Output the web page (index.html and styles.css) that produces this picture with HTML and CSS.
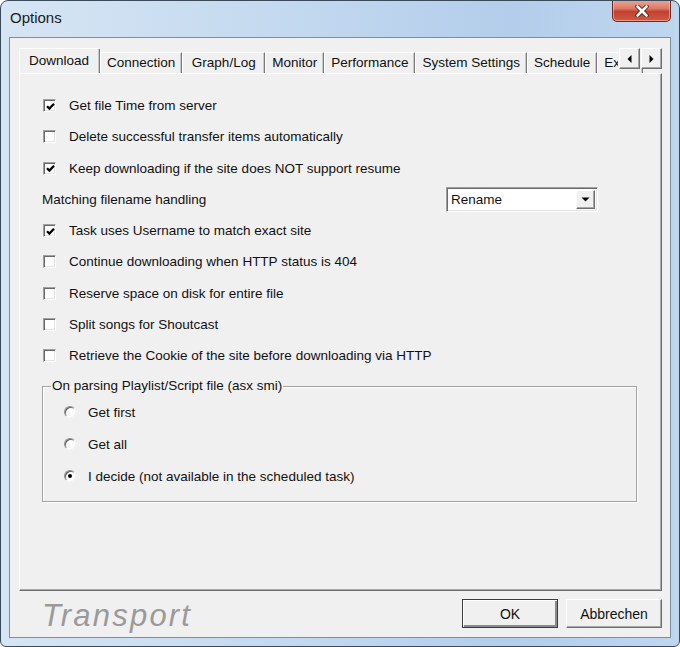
FILE: index.html
```html
<!DOCTYPE html>
<html>
<head>
<meta charset="utf-8">
<title>Options</title>
<link rel="stylesheet" href="styles.css">
</head>
<body>
<div class="window">
  <div class="titlebar">
    <span class="title">Options</span>
    <div class="close">
      <svg width="14" height="12" viewBox="0 0 14 12">
        <path d="M2.5 1.5 L11.5 10.5 M11.5 1.5 L2.5 10.5" stroke="#5a1810" stroke-width="4.4" stroke-linecap="round"/>
        <path d="M2.5 1.5 L11.5 10.5 M11.5 1.5 L2.5 10.5" stroke="#ffffff" stroke-width="2.6" stroke-linecap="round"/>
      </svg>
    </div>
  </div>
  <div class="client">
    <div class="tabctl">
      <div class="tabstrip">
        <div class="tab active">Download</div>
        <div class="tab">Connection</div>
        <div class="tab wide">Graph/Log</div>
        <div class="tab">Monitor</div>
        <div class="tab">Performance</div>
        <div class="tab">System Settings</div>
        <div class="tab">Schedule</div>
        <div class="tab">Extra</div>
        <div class="scroller">
          <div class="sbtn"><svg width="5" height="8" viewBox="0 0 5 8"><path d="M4.5 0 L4.5 8 L0.5 4 Z" fill="#000"/></svg></div>
          <div class="sbtn"><svg width="5" height="8" viewBox="0 0 5 8"><path d="M0.5 0 L0.5 8 L4.5 4 Z" fill="#000"/></svg></div>
        </div>
      </div>
      <div class="panel">
        <div class="row"><span class="cb checked"><svg width="9" height="9" viewBox="0 0 9 9"><path d="M1 4.2 L3.4 6.6 L8 1.8" stroke="#000" stroke-width="2.2" fill="none"/></svg></span><span class="lbl">Get file Time from server</span></div>
        <div class="row"><span class="cb"></span><span class="lbl">Delete successful transfer items automatically</span></div>
        <div class="row"><span class="cb checked"><svg width="9" height="9" viewBox="0 0 9 9"><path d="M1 4.2 L3.4 6.6 L8 1.8" stroke="#000" stroke-width="2.2" fill="none"/></svg></span><span class="lbl">Keep downloading if the site does NOT support resume</span></div>
        <div class="row plain">
          <span>Matching filename handling</span>
          <div class="select">
            <span class="sel-text">Rename</span>
            <span class="sel-arrow"><svg width="9" height="5" viewBox="0 0 9 5"><path d="M0.5 0.5 L8.5 0.5 L4.5 4.5 Z" fill="#000"/></svg></span>
          </div>
        </div>
        <div class="row"><span class="cb checked"><svg width="9" height="9" viewBox="0 0 9 9"><path d="M1 4.2 L3.4 6.6 L8 1.8" stroke="#000" stroke-width="2.2" fill="none"/></svg></span><span class="lbl">Task uses Username to match exact site</span></div>
        <div class="row"><span class="cb"></span><span class="lbl">Continue downloading when HTTP status is 404</span></div>
        <div class="row"><span class="cb"></span><span class="lbl">Reserve space on disk for entire file</span></div>
        <div class="row"><span class="cb"></span><span class="lbl">Split songs for Shoutcast</span></div>
        <div class="row"><span class="cb"></span><span class="lbl">Retrieve the Cookie of the site before downloading via HTTP</span></div>
        <fieldset class="group">
          <legend>On parsing Playlist/Script file (asx smi)</legend>
          <div class="rrow"><span class="radio"></span><span class="rlbl">Get first</span></div>
          <div class="rrow"><span class="radio"></span><span class="rlbl">Get all</span></div>
          <div class="rrow"><span class="radio on"></span><span class="rlbl">I decide (not available in the scheduled task)</span></div>
        </fieldset>
      </div>
    </div>
    <div class="footer">
      <span class="brand">Transport</span>
      <div class="buttons">
        <div class="btn default">OK</div>
        <div class="btn">Abbrechen</div>
      </div>
    </div>
  </div>
</div>
</body>
</html>
```

FILE: styles.css
```css
html, body {
  margin: 0;
  padding: 0;
  background: #ffffff;
}

body {
  font-family: "Liberation Sans", Arial, sans-serif;
  font-size: 13.5px;
  color: #111;
}

.window {
  width: 680px;
  height: 647px;
  box-sizing: border-box;
  border: 1px solid #3b4a5b;
  border-radius: 8px 8px 6px 6px;
  background: linear-gradient(to right, #d6e5f4 0%, #c2d8ef 45%, #b3cdea 75%, #bfd6ef 100%);
  padding: 0 8px 8px 8px;
  display: flex;
  flex-direction: column;
  overflow: hidden;
}

.titlebar {
  height: 36px;
  display: flex;
  justify-content: space-between;
  align-items: flex-start;
  flex-shrink: 0;
}

.title {
  font-family: "Liberation Sans", Arial, sans-serif;
  font-size: 15px;
  line-height: 34px;
  padding-left: 1px;
  color: #1a1a1a;
}

.close {
  width: 59px;
  height: 22px;
  margin-top: -1px;
  box-sizing: border-box;
  border: 1px solid #6e2a20;
  border-top: none;
  border-radius: 0 0 5px 5px;
  background: linear-gradient(to bottom, #e9a897 0%, #dd7a66 40%, #c2412f 55%, #cf5a42 100%);
  box-shadow: inset 0 0 0 1px rgba(255, 210, 200, 0.5);
  display: flex;
  align-items: center;
  justify-content: center;
}

.client {
  flex: 1;
  background: #f0f0f0;
  border: 1px solid #7f8d9c;
  padding: 10px 8px 0 9px;
  display: flex;
  flex-direction: column;
}

.tabctl {
  display: flex;
  flex-direction: column;
}

.tabstrip {
  position: relative;
  height: 25px;
  display: flex;
  align-items: flex-end;
  overflow: hidden;
  z-index: 1;
}

.tab {
  height: 21px;
  box-sizing: border-box;
  padding: 0 6px;
  line-height: 20px;
  font-size: 13.5px;
  white-space: nowrap;
  background: #f0f0f0;
  border-left: 1px solid #ffffff;
  border-top: 1px solid #ffffff;
  border-right: 1px solid #7a7a7a;
  box-shadow: inset -1px 0 0 #c9c9c9;
  flex-shrink: 0;
}

.tab.wide {
  padding: 0 8.5px;
}

.tab.active {
  height: 26px;
  margin-bottom: -1px;
  padding: 0 10px 0 9px;
  line-height: 24px;
  border-radius: 2px 2px 0 0;
}

.scroller {
  position: absolute;
  right: 0;
  top: 0;
  display: flex;
  gap: 1px;
  background: #f0f0f0;
  padding-left: 1px;
}

.sbtn {
  width: 21px;
  height: 21px;
  box-sizing: border-box;
  border: 1px solid;
  border-color: #ffffff #6e6e6e #6e6e6e #ffffff;
  box-shadow: inset -1px -1px 0 #a8a8a8;
  background: #f0f0f0;
  display: flex;
  align-items: center;
  justify-content: center;
}

.panel {
  height: 518px;
  box-sizing: border-box;
  border: 1px solid;
  border-color: #ffffff #6e6e6e #6e6e6e #ffffff;
  box-shadow: inset -1px -1px 0 #a8a8a8;
  background: #f0f0f0;
  padding-top: 16px;
}

.row {
  height: 31.25px;
  display: flex;
  align-items: center;
  padding-left: 23px;
  padding-right: 63px;
}

.row.plain {
  padding-left: 22px;
  justify-content: space-between;
}

.cb {
  width: 13px;
  height: 13px;
  box-sizing: border-box;
  background: #ffffff;
  border: 1px solid;
  border-color: #a0a0a0 #ffffff #ffffff #a0a0a0;
  box-shadow: inset 1px 1px 0 #6a6a6a, inset -1px -1px 0 #e3e3e3;
  display: flex;
  align-items: center;
  justify-content: center;
  flex-shrink: 0;
}

.cb svg {
  margin: 1px 0 0 1px;
}

.lbl {
  margin-left: 13px;
  white-space: nowrap;
}

.select {
  width: 152px;
  height: 25px;
  box-sizing: border-box;
  background: #ffffff;
  border: 1px solid;
  border-color: #a0a0a0 #ffffff #ffffff #a0a0a0;
  box-shadow: inset 1px 1px 0 #6a6a6a, inset -1px -1px 0 #e3e3e3;
  display: flex;
  align-items: center;
  padding: 2px 2px 2px 4px;
}

.sel-text {
  flex: 1;
}

.sel-arrow {
  width: 19px;
  height: 19px;
  box-sizing: border-box;
  border: 1px solid;
  border-color: #ffffff #6e6e6e #6e6e6e #ffffff;
  box-shadow: inset -1px -1px 0 #a8a8a8;
  background: #f0f0f0;
  display: flex;
  align-items: center;
  justify-content: center;
}

.group {
  margin: 7px 24px 0 22px;
  padding: 2px 0 9px 0;
  border: 1px solid #a3a3a3;
  box-shadow: inset 1px 1px 0 #ffffff, 1px 1px 0 #ffffff;
}

.group legend {
  margin-left: 8px;
  padding: 0 1px;
  line-height: 16px;
}

.rrow {
  height: 32px;
  display: flex;
  align-items: center;
  padding-left: 21px;
}

.radio {
  width: 12px;
  height: 12px;
  box-sizing: border-box;
  border-radius: 50%;
  background: #ffffff;
  border: 1px solid;
  border-color: #8c8c8c #f4f4f4 #f4f4f4 #8c8c8c;
  box-shadow: inset 1px 1px 0 #5e5e5e;
  position: relative;
  flex-shrink: 0;
}

.radio.on::after {
  content: "";
  position: absolute;
  left: 3px;
  top: 3px;
  width: 4px;
  height: 4px;
  border-radius: 50%;
  background: #000;
}

.rlbl {
  margin-left: 12px;
  white-space: nowrap;
}

.footer {
  flex: 1;
  display: flex;
  justify-content: space-between;
  align-items: flex-start;
  padding-top: 8px;
}

.brand {
  margin-left: 23px;
  margin-top: 1px;
  font-family: "Liberation Sans", Arial, sans-serif;
  font-style: italic;
  font-size: 31px;
  line-height: 31px;
  letter-spacing: 2.2px;
  color: #9a9a9a;
}

.buttons {
  display: flex;
  gap: 8px;
}

.btn {
  width: 96px;
  height: 29px;
  box-sizing: border-box;
  border: 1px solid;
  border-color: #ffffff #6e6e6e #6e6e6e #ffffff;
  box-shadow: inset -1px -1px 0 #a8a8a8;
  background: #f0f0f0;
  display: flex;
  align-items: center;
  justify-content: center;
  font-size: 14px;
}

.btn.default {
  border: 1px solid #3c3c3c;
  box-shadow: inset 1px 1px 0 #ffffff, inset -2px -2px 0 #8a8a8a;
}
```
